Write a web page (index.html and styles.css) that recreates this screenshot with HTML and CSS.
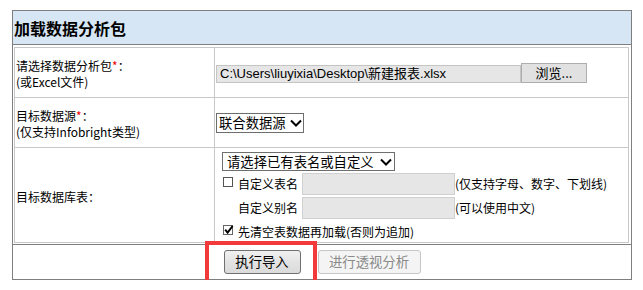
FILE: index.html
```html
<!DOCTYPE html>
<html lang="zh-CN">
<head>
<meta charset="utf-8">
<title>加载数据分析包</title>
<link rel="stylesheet" href="styles.css">
</head>
<body>
<div class="panel">
  <div class="panel-head">加载数据分析包</div>
  <div class="form">
    <div class="lbl"><span>请选择数据分析包<span class="req">*</span>：<br>(或Excel文件)</span></div>
    <div class="val">
      <div class="file">
        <span class="file-path">C:\Users\liuyixia\Desktop\新建报表.xlsx</span>
        <span class="file-btn">浏览...</span>
      </div>
    </div>

    <div class="lbl"><span>目标数据源<span class="req">*</span>：<br>(仅支持Infobright类型)</span></div>
    <div class="val">
      <div class="sel sel-src"><span>联合数据源</span><svg class="chev" width="12" height="8" viewBox="0 0 12 8"><polyline points="1,1.5 6,6.5 11,1.5" fill="none" stroke="#000" stroke-width="2"/></svg></div>
    </div>

    <div class="lbl"><span>目标数据库表：</span></div>
    <div class="val val-table">
      <div class="sel sel-table"><span>请选择已有表名或自定义</span><svg class="chev" width="12" height="8" viewBox="0 0 12 8"><polyline points="1,1.5 6,6.5 11,1.5" fill="none" stroke="#000" stroke-width="2"/></svg></div>
      <div class="line line-name">
        <span class="cb"></span>
        <span class="txt">自定义表名</span>
        <input class="inp" type="text">
        <span class="hint">(仅支持字母、数字、下划线)</span>
      </div>
      <div class="line line-alias">
        <span class="txt">自定义别名</span>
        <input class="inp" type="text">
        <span class="hint">(可以使用中文)</span>
      </div>
      <div class="line line-clear">
        <span class="cb cb-checked"><svg width="10" height="10" viewBox="0 0 10 10"><polyline points="1.2,4.6 3.6,7.6 8.6,1" fill="none" stroke="#000" stroke-width="2"/></svg></span>
        <span class="txt">先清空表数据再加载(否则为追加)</span>
      </div>
    </div>
  </div>
  <div class="actions">
    <span class="mark"><button class="btn btn-import" type="button">执行导入</button></span>
    <button class="btn btn-pivot" type="button" disabled>进行透视分析</button>
  </div>
</div>
</body>
</html>
```
FILE: styles.css
```css
* { box-sizing: border-box; }

body {
  margin: 0;
  background: #fff;
  color: #000;
  font-family: "Noto Sans CJK SC", "Liberation Sans", sans-serif;
  font-size: 12px;
}

.panel {
  width: 620px;
  margin: 10px 0 0 12px;
  border: 1px solid #7f7f7f;
}

.panel-head {
  height: 34px;
  padding: 2px 0 0 1px;
  line-height: 31px;
  background: #d6e6f5;
  border-bottom: 1px solid #7f7f7f;
  font-size: 16px;
  font-weight: bold;
}

.form {
  display: grid;
  grid-template-columns: 200px 414px;
  grid-template-rows: 50px 50px 95px;
  margin: 2px 2px 1px 1px;
  border-top: 1px solid #c8c8c8;
  border-left: 1px solid #c8c8c8;
}

.form > div {
  border-right: 1px solid #c8c8c8;
  border-bottom: 1px solid #c8c8c8;
}

.lbl {
  display: flex;
  align-items: center;
  padding: 3px 0 0 1px;
  line-height: 16px;
}

.req { color: #e00; }

.val {
  display: flex;
  align-items: center;
  padding-left: 1px;
}

.file {
  display: flex;
  align-items: flex-end;
}

.file-path {
  width: 305px;
  height: 18px;
  padding-left: 3px;
  background: #e6e6e6;
  border: 1px solid #c4c4c4;
  font: 13px/16px "Liberation Sans", "Noto Sans CJK SC", sans-serif;
  white-space: nowrap;
  overflow: hidden;
}

.file-btn {
  width: 66px;
  height: 20px;
  margin-left: 0;
  background: #e1e1e1;
  border: 1px solid #adadad;
  font-size: 13px;
  line-height: 18px;
  text-align: center;
}

.sel {
  display: flex;
  align-items: center;
  justify-content: space-between;
  border: 1px solid #6e6e6e;
  font-size: 13.33px;
  line-height: 17px;
  background: #fff;
}

.sel-src {
  width: 88px;
  height: 20px;
  padding: 0 1px 0 2px;
}

.sel-table {
  width: 173px;
  height: 19px;
  padding: 0 2px 0 4px;
}

.chev { display: block; flex: none; }

.val-table {
  flex-direction: column;
  align-items: flex-start;
  justify-content: flex-start;
  padding: 4px 0 0 7px;
}

.line {
  display: flex;
  align-items: center;
  white-space: nowrap;
}

.line-name { height: 22px; margin-top: 2px; }
.line-alias { height: 22px; margin-top: 2px; padding-left: 16px; }
.line-clear { height: 18px; margin-top: 4px; }

.cb {
  width: 10px;
  height: 10px;
  margin: 0 5px 4px 1px;
  border: 1px solid #555;
  background: #fff;
  flex: none;
}

.cb-checked {
  position: relative;
  border-color: #666;
}

.cb-checked svg {
  display: block;
  margin: -1px 0 0 0;
}

.txt { line-height: 16px; }

.inp {
  width: 153px;
  height: 22px;
  margin: 0 0 0 4px;
  padding: 0 2px;
  background: #e6e6e6;
  border: 1px solid #d0d0d0;
  font: inherit;
  outline: none;
}

.hint { line-height: 16px; }

.actions {
  display: flex;
  justify-content: center;
  gap: 17px;
  height: 35px;
  padding-top: 5px;
  border-top: 1px solid #7f7f7f;
}

.btn {
  height: 24px;
  padding: 0;
  font-family: "Noto Sans CJK SC", sans-serif;
  font-size: 13.33px;
  line-height: 20px;
  border-radius: 3px;
}

.btn-import {
  width: 77px;
  color: #000;
  background: linear-gradient(#f1f1f1, #e3e3e3 50%, #dbdbdb);
  border: 1px solid #707070;
}

.btn-pivot {
  width: 103px;
  color: #8a8a8a;
  background: #f4f4f4;
  border: 1px solid #c6c6c6;
}

.mark {
  position: relative;
  display: inline-flex;
}

.mark::after {
  content: "";
  position: absolute;
  left: -19px;
  right: -16px;
  top: -9px;
  bottom: -8px;
  border: 4px solid #f33a3a;
  pointer-events: none;
}
```
